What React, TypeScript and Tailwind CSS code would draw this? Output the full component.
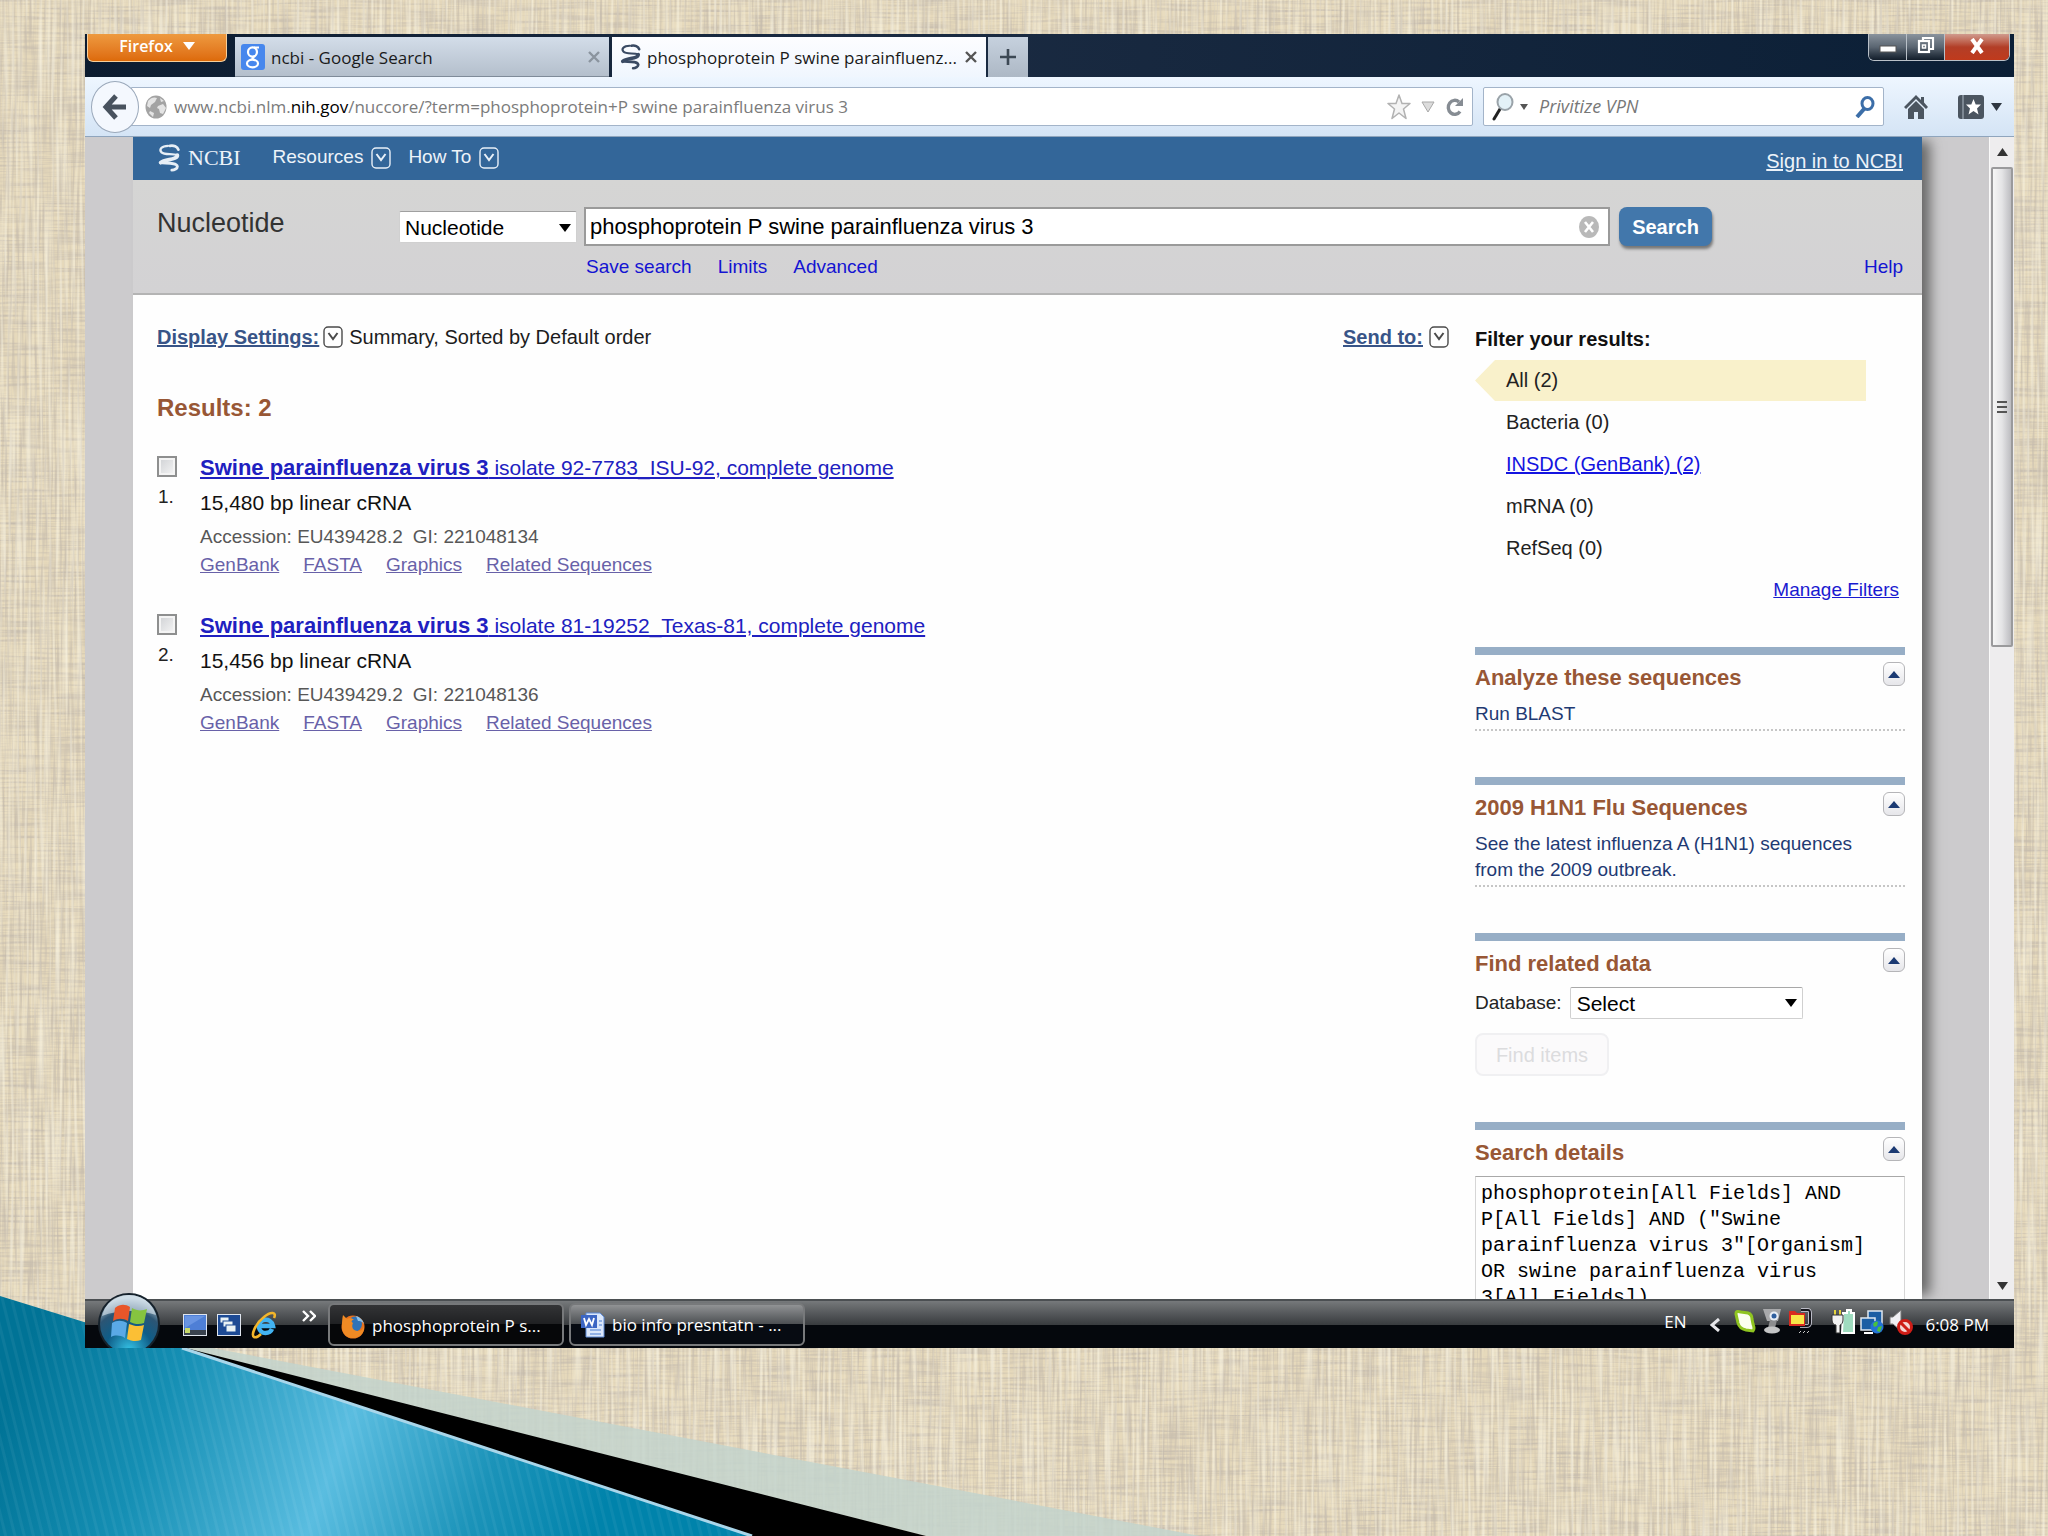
import React from "react";

const sans = "font-['Liberation_Sans',Arial,sans-serif]";
const ui = "font-['Open_Sans','Noto_Sans',sans-serif]";

function Backdrop() {
  return (
    <svg className="absolute inset-0 h-full w-full" aria-hidden="true">
      <defs>
        <filter id="weft" x="0" y="0" width="100%" height="100%">
          <feTurbulence type="fractalNoise" baseFrequency="0.02 0.4" numOctaves="2" seed="4" />
          <feColorMatrix values="0 0 0 0 0.56  0 0 0 0 0.50  0 0 0 0 0.42  2 0 0 0 -0.8" />
        </filter>
        <filter id="warp" x="0" y="0" width="100%" height="100%">
          <feTurbulence type="fractalNoise" baseFrequency="0.4 0.02" numOctaves="2" seed="9" />
          <feColorMatrix values="0 0 0 0 0.56  0 0 0 0 0.50  0 0 0 0 0.42  2 0 0 0 -0.85" />
        </filter>
        <filter id="shine" x="0" y="0" width="100%" height="100%">
          <feTurbulence type="fractalNoise" baseFrequency="0.35 0.01" numOctaves="1" seed="21" />
          <feColorMatrix values="0 0 0 0 0.96  0 0 0 0 0.92  0 0 0 0 0.78  0 1.8 0 0 -0.75" />
        </filter>
        <linearGradient id="teal" gradientUnits="userSpaceOnUse" x1="0" y1="120" x2="560" y2="330">
          <stop offset="0" stopColor="#007396" />
          <stop offset="0.25" stopColor="#158fb4" />
          <stop offset="0.55" stopColor="#5abde0" />
          <stop offset="0.8" stopColor="#1b93b9" />
          <stop offset="1" stopColor="#0083ab" />
        </linearGradient>
        <pattern id="rib" width="9" height="9" patternUnits="userSpaceOnUse" patternTransform="rotate(-14)">
          <rect width="3" height="9" fill="#ffffff" opacity="0.05" />
        </pattern>
      </defs>
      <rect width="100%" height="100%" fill="#e6d9bb" />
      <rect width="100%" height="100%" filter="url(#weft)" />
      <rect width="100%" height="100%" filter="url(#warp)" />
      <rect width="100%" height="100%" filter="url(#shine)" />
    </svg>
  );
}

function Ribbon() {
  return (
    <svg className="absolute bottom-0 left-0" width="1200" height="240" viewBox="0 0 1200 240" aria-hidden="true">
      <polygon points="176,52 212,52 1200,240 926,240" fill="#c3d3cc" opacity="0.85" />
      <polygon points="170,48 926,240 748,240" fill="#000000" />
      <polygon points="0,0 84,26 182,52 752,240 0,240" fill="url(#teal)" />
      <polygon points="0,0 84,26 182,52 752,240 0,240" fill="url(#rib)" />
      <path d="M182 52 752 240" stroke="#a9d6ea" strokeWidth="3" />
    </svg>
  );
}

function Helix({ className, color }: { className: string; color: string }) {
  return (
    <svg viewBox="0 0 24 30" className={className} fill="none" stroke={color} strokeLinecap="round" aria-hidden="true">
      <path d="M11 2C4 2 1 6 4 9c3 3 12 1 17 3" strokeWidth="2.400" />
      <path d="M13 2c4-1 8 1 9 4" strokeWidth="3" />
      <path d="M21 12c0 5-13 4-18 8" strokeWidth="4" />
      <path d="M3 20c4 1 17-1 18 4 0 2-3 4-6 4" strokeWidth="3" />
    </svg>
  );
}

function DropIcon({ light = false }: { light?: boolean }) {
  return (
    <svg viewBox="0 0 20 22" className="h-[22px] w-5 shrink-0" fill="none" stroke={light ? "#e8f0f8" : "#4a4a4a"} aria-hidden="true">
      <rect x="1" y="1" width="18" height="20" rx="4" strokeWidth="1.400" />
      <path d="m5.500 7 4.500 6 4.500-6" strokeWidth="2" />
    </svg>
  );
}

function TitleBar() {
  return (
    <div className="flex h-[43px] shrink-0 items-start bg-linear-to-r from-[#0c1c30] via-[#1b2b42] via-40% to-[#0b1f36]">
      <button className={`${ui} ml-[2px] flex h-7 w-[140px] items-center justify-center gap-[10px] rounded-b-md border border-t-0 border-[#f6cf9c] bg-linear-to-b from-[#ee9a3e] to-[#dd6a08] pb-1 text-[16px] font-semibold text-white`}>
        Firefox
        <svg viewBox="0 0 12 8" className="h-2 w-3" aria-hidden="true"><path d="M0 0h12L6 8z" fill="#fff" /></svg>
      </button>
      <div className="flex h-full items-end pt-[3px]">
        <div className={`${ui} ml-2 flex h-full w-[374px] items-center border-b border-[#7f8b99] bg-linear-to-b from-[#d3dde9] to-[#b4bfcc] pl-[6px] pr-[9px] text-[17px] text-[#1a1a1a]`}>
          <svg viewBox="0 0 24 26" className="mr-[6px] h-[26px] w-6 shrink-0" aria-hidden="true">
            <rect width="24" height="26" rx="3" fill="#4787ed" />
            <g fill="none" stroke="#fff" strokeWidth="2.200">
              <ellipse cx="11.500" cy="8" rx="4.500" ry="4.600" />
              <path d="M13 3.500h5M14 12c-3 2-4 2 0 4.500" />
              <ellipse cx="11.500" cy="19.500" rx="5.500" ry="3.800" />
            </g>
          </svg>
          <span className="grow truncate pt-[2px]">ncbi - Google Search</span>
          <svg viewBox="0 0 12 12" className="h-3 w-3" stroke="#8b949e" strokeWidth="2.400" aria-hidden="true"><path d="m1 1 10 10M11 1 1 11" /></svg>
        </div>
        <div className={`${ui} ml-[3px] flex h-full w-[374px] items-center bg-linear-to-b from-[#fdfdff] to-[#f0f6fe] pl-2 pr-[9px] text-[17px] text-[#1a1a1a]`}>
          <Helix className="mr-[6px] h-[26px] w-[21px] shrink-0" color="#3a4a63" />
          <span className="grow whitespace-nowrap pt-[2px]">phosphoprotein P swine parainfluenz...</span>
          <svg viewBox="0 0 12 12" className="h-3 w-3 shrink-0" stroke="#555" strokeWidth="2.400" aria-hidden="true"><path d="m1 1 10 10M11 1 1 11" /></svg>
        </div>
        <button aria-label="New tab" className="ml-[2px] flex h-full w-10 items-center justify-center bg-linear-to-b from-[#c6d1de] to-[#adb8c5]">
          <svg viewBox="0 0 16 16" className="h-4 w-4" stroke="#3c4854" strokeWidth="2.600" aria-hidden="true"><path d="M8 0v16M0 8h16" /></svg>
        </button>
      </div>
      <div className="ml-auto mr-1 flex h-[27px] overflow-hidden rounded-b-md border border-t-0 border-[#b9c0c8]">
        <button aria-label="Minimize" className="flex w-[38px] items-center justify-center border-r border-[#b9c0c8] bg-linear-to-b from-[#8a939d] via-[#5b6672] via-50% to-[#131e2b]">
          <svg viewBox="0 0 18 8" className="mt-1 h-2 w-[18px]" aria-hidden="true"><rect x="1" y="1" width="16" height="6" fill="#fff" stroke="#555" /></svg>
        </button>
        <button aria-label="Restore" className="flex w-[38px] items-center justify-center border-r border-[#b9c0c8] bg-linear-to-b from-[#8a939d] via-[#5b6672] via-50% to-[#131e2b]">
          <svg viewBox="0 0 18 18" className="mb-1 h-[18px] w-[18px]" fill="none" stroke="#fff" strokeWidth="2.200" aria-hidden="true"><path d="M6 4V2h10v11h-3" /><rect x="2" y="5" width="10" height="11" /><rect x="5.500" y="9" width="3" height="3" strokeWidth="1.500" /></svg>
        </button>
        <button aria-label="Close" className="flex w-[64px] items-center justify-center bg-linear-to-b from-[#cf9a8d] via-[#b23e27] via-50% to-[#c03a1c]">
          <svg viewBox="0 0 16 16" className="mb-[3px] h-4 w-4" stroke="#fff" strokeWidth="4" aria-hidden="true"><path d="m3 1 10 14M13 1 3 15" /></svg>
        </button>
      </div>
    </div>
  );
}

function NavBar() {
  return (
    <div className="flex h-[60px] shrink-0 items-center border-b border-[#8fa5bd] bg-linear-to-b from-[#eef6ff] to-[#d4e4f5] pr-3">
      <button aria-label="Back" className="z-10 ml-[6px] flex h-[52px] w-12 shrink-0 items-center justify-center rounded-[50%] border border-[#9aa8ba] bg-[#f4f8fe]">
        <svg viewBox="0 0 24 26" className="mr-[2px] h-[26px] w-6" fill="none" stroke="#48525e" strokeWidth="5" aria-hidden="true"><path d="M24 13H5M14 2 4 13l10 11" /></svg>
      </button>
      <div className={`${ui} -ml-2 flex h-[39px] min-w-0 grow items-center rounded-r-xs border border-[#a3b4c9] bg-white pl-[13px] pr-2 text-[17px] text-[#7b7b7b]`}>
        <svg viewBox="0 0 22 24" className="mr-[7px] h-6 w-[22px] shrink-0" aria-hidden="true">
          <ellipse cx="11" cy="12" rx="10.500" ry="11.500" fill="#a3a3a3" />
          <path d="M3 6c3-4 7-4 9-3l-2 4-4 3-1 3-3-2zM13 11l5-2 3 4-3 6-3-1-1-4-2-1zM5 16l4 2-1 4-4-4zM15 3l4 3-3 1z" fill="#e4e4e4" />
        </svg>
        <p className="grow truncate">
          www.ncbi.nlm.<span className="text-black">nih.gov</span>/nuccore/?term=phosphoprotein+P swine parainfluenza virus 3
        </p>
        <svg viewBox="0 0 24 26" className="h-[26px] w-6 shrink-0" fill="#f4f4f4" stroke="#b2b2b2" strokeWidth="1.500" strokeLinejoin="round" aria-hidden="true"><path d="m12 1 3 8.500h8l-6.500 5.500 2.500 9.500-7-5.500-7 5.500L7.500 15 1 9.500h8z" /></svg>
        <svg viewBox="0 0 14 12" className="ml-[10px] h-3 w-[14px] shrink-0" fill="#dcdcdc" stroke="#a8a8a8" aria-hidden="true"><path d="M1 1h12L7 11z" /></svg>
        <svg viewBox="0 0 18 20" className="ml-[11px] h-5 w-[18px] shrink-0" fill="none" stroke="#868c93" strokeWidth="3.400" aria-hidden="true"><path d="M14 14.500A6.500 7 0 1 1 13 5" /><path d="M17 1v8h-8z" fill="#868c93" stroke="none" /></svg>
      </div>
      <div className="ml-[10px] flex h-[39px] w-[401px] shrink-0 items-center rounded-xs border border-[#a3b4c9] bg-white pl-2 pr-2">
        <svg viewBox="0 0 22 28" className="h-7 w-[22px]" aria-hidden="true">
          <path d="m8 16-6 10" stroke="#222" strokeWidth="3" strokeLinecap="round" />
          <ellipse cx="13" cy="9" rx="7.500" ry="8" fill="#e3f1f7" stroke="#9aa3a9" strokeWidth="2" />
        </svg>
        <svg viewBox="0 0 8 6" className="ml-[6px] h-[6px] w-2" aria-hidden="true"><path d="M0 0h8L4 6z" fill="#555" /></svg>
        <input aria-label="Search engine" placeholder="Privitize VPN" className={`${ui} ml-2 min-w-0 grow pl-[3px] text-[18px] italic outline-none placeholder:text-[#777]`} />
        <svg viewBox="0 0 20 22" className="h-[22px] w-5" fill="none" stroke="#3c6ea8" aria-hidden="true"><ellipse cx="12.500" cy="7.500" rx="5.500" ry="6" strokeWidth="3" /><path d="m9 13-7 8" strokeWidth="4" /></svg>
      </div>
      <svg viewBox="0 0 24 24" className="ml-5 h-6 w-6 shrink-0" fill="#4b5560" aria-hidden="true"><path d="M12 0 0 12l2 2L12 4l10 10 2-2-4-4.500V2h-3v3z" /><path d="m12 6 8 8v10h-6v-7h-4v7H4V14z" /></svg>
      <svg viewBox="0 0 26 24" className="ml-[30px] h-6 w-[26px] shrink-0" aria-hidden="true"><rect width="26" height="24" rx="3" fill="#4b5560" /><path d="M5 0v24" stroke="#7c8792" strokeWidth="2" /><path d="m15.500 4 2.200 5.500h5.300l-4 4 1.500 6-5-3.500-5 3.500 1.500-6-4-4h5.300z" fill="#fff" /></svg>
      <svg viewBox="0 0 11 8" className="ml-[7px] h-2 w-[11px] shrink-0" aria-hidden="true"><path d="M0 0h11L5.500 8z" fill="#2e3640" /></svg>
    </div>
  );
}

function SiteHeader() {
  return (
    <header>
      <div className="flex h-[43px] items-center bg-[#336699] pb-[2px] pl-6 pr-[19px] text-[19px] text-[#edf3f9]">
        <Helix className="h-7 w-6" color="#e6eef6" />
        <span className="ml-[7px] font-['Liberation_Serif',serif] text-[22px]">NCBI</span>
        <a href="#resources" className="ml-8 flex items-center gap-2">Resources <DropIcon light /></a>
        <a href="#howto" className="ml-[17px] flex items-center gap-2">How To <DropIcon light /></a>
        <a href="#signin" className="ml-auto pt-[7px] text-[20px] underline">Sign in to NCBI</a>
      </div>
      <div className="flex h-[115px] items-start border-b-2 border-[#b4b4b4] bg-linear-to-b from-[#d5d5d4] to-[#d3d2d4] pl-6 pr-[19px] pt-[27px]">
        <h1 className="w-[242px] text-[27px] leading-8 text-[#333]">Nucleotide</h1>
        <div className="relative mt-1">
          <select aria-label="Database to search" className="block h-8 w-[178px] appearance-none rounded-xs border border-[#d0d0d0] border-t-[#a0a0a0] bg-white pl-[5px] text-[21px] text-black">
            <option>Nucleotide</option>
          </select>
          <svg viewBox="0 0 12 8" className="pointer-events-none absolute right-[6px] top-[13px] h-2 w-3" aria-hidden="true"><path d="M0 0h12L6 8z" /></svg>
        </div>
        <div className="ml-[7px] grow">
          <div className="flex items-center">
            <div className="flex h-[39px] grow items-center border-2 border-[#9a9a9a] bg-white pl-1 pr-[9px]">
              <input aria-label="Search term" defaultValue="phosphoprotein P swine parainfluenza virus 3" className="min-w-0 grow text-[22px] text-black outline-none" />
              <svg viewBox="0 0 20 22" className="h-[22px] w-5" aria-hidden="true"><ellipse cx="10" cy="11" rx="10" ry="11" fill="#b9b9b9" /><path d="m6 6 8 10M14 6 6 16" stroke="#fff" strokeWidth="2.600" /></svg>
            </div>
            <button className="ml-[9px] mr-[191px] h-[39px] w-[93px] shrink-0 rounded-lg bg-[#4277ab] text-[20px] font-bold text-white shadow-[1px_3px_3px_#777]">Search</button>
          </div>
          <nav className="flex items-center pl-[2px] pt-[5px] text-[19px] leading-8 text-[#1414d2]">
            <a href="#save">Save search</a>
            <a href="#limits" className="ml-[26px]">Limits</a>
            <a href="#advanced" className="ml-[26px]">Advanced</a>
            <a href="#help" className="ml-auto">Help</a>
          </nav>
        </div>
      </div>
    </header>
  );
}

const results = [
  { rest: " isolate 92-7783_ISU-92, complete genome", size: "15,480", acc: "EU439428.2", gi: "221048134" },
  { rest: " isolate 81-19252_Texas-81, complete genome", size: "15,456", acc: "EU439429.2", gi: "221048136" },
];

function Results() {
  return (
    <main className="min-w-0 grow pl-6">
      <div className="flex items-center pt-7 text-[20px] leading-7">
        <a href="#display" className="font-bold text-[#385487] underline">Display Settings:</a>
        <span className="ml-1"><DropIcon /></span>
        <span className="ml-[6px] text-[#1c1c1c]">Summary, Sorted by Default order</span>
        <a href="#send" className="ml-auto font-bold text-[#385487] underline">Send to:</a>
        <span className="ml-[6px]"><DropIcon /></span>
      </div>
      <h2 className="pt-[41px] text-[24px] font-bold leading-8 text-[#985735]">Results: 2</h2>
      <ol>
        {results.map((r, i) => (
          <li key={r.acc} className="flex h-[158px] pt-7">
            <div className="w-[43px]">
              <input type="checkbox" id={`r${i}`} aria-label={`Select item ${i + 1}`} className="mt-1 block h-[21px] w-5 appearance-none border-2 border-[#8e8f8f] bg-linear-to-br from-[#cfd1d4] to-[#f6f6f6] shadow-[inset_0_0_0_2px_#f4f4f4]" />
              <label htmlFor={`r${i}`} className="mt-[6px] block pl-[1px] text-[19px] leading-7 text-[#222]">{i + 1}.</label>
            </div>
            <div>
              <a href="#item" className="block text-[21px] leading-8 text-[#2020c0] underline">
                <b className="text-[22px]">Swine parainfluenza virus 3</b>{r.rest}
              </a>
              <p className="pt-[3px] text-[21px] leading-8 text-[#111]">{r.size} bp linear cRNA</p>
              <p className="mt-1 text-[19px] leading-7 text-[#575757]">
                Accession: {r.acc}<span className="ml-[10px]">GI: {r.gi}</span>
              </p>
              <div className="flex gap-6 text-[19px] leading-7 text-[#6861a8]">
                {["GenBank", "FASTA", "Graphics", "Related Sequences"].map((t) => (
                  <a key={t} href={`#${t}`} className="underline">{t}</a>
                ))}
              </div>
            </div>
          </li>
        ))}
      </ol>
    </main>
  );
}

function Portlet({ title, children }: { title: string; children: React.ReactNode }) {
  return (
    <section className="mb-[46px] border-t-8 border-[#97aec6]">
      <div className="flex h-[46px] items-start justify-between">
        <h3 className="pt-[7px] text-[22px] font-bold leading-8 text-[#985735]">{title}</h3>
        <button aria-label={`Collapse ${title}`} className="mt-[7px] flex h-6 w-[22px] items-center justify-center rounded-md border border-[#b5b5b8] bg-linear-to-b from-white to-[#e6e6ea]">
          <svg viewBox="0 0 12 7" className="h-[7px] w-3" aria-hidden="true"><path d="M6 0 12 7H0z" fill="#1b3a73" /></svg>
        </button>
      </div>
      {children}
    </section>
  );
}

const filters = ["All (2)", "Bacteria (0)", "INSDC (GenBank) (2)", "mRNA (0)", "RefSeq (0)"];

function Sidebar() {
  return (
    <aside className="ml-[26px] w-[430px] shrink-0">
      <h3 className="pt-[30px] text-[20px] font-bold leading-7 text-[#111]">Filter your results:</h3>
      <ul className="pt-[7px] text-[20px] text-[#222]">
        {filters.map((f, i) => (
          <li
            key={f}
            className={
              i === 0
                ? "mr-[39px] flex h-[41px] items-center bg-[#f9f1cb] pb-[2px] pl-[31px] [clip-path:polygon(0_50%,20px_0,100%_0,100%_100%,20px_100%)]"
                : "flex h-[42px] items-center pl-[31px]"
            }
          >
            {i === 2 ? <a href="#insdc" className="text-[#1414e0] underline">{f}</a> : f}
          </li>
        ))}
      </ul>
      <a href="#filters" className="mb-[43px] mt-[7px] block pr-[6px] text-right text-[19px] leading-7 text-[#1a1ad0] underline">Manage Filters</a>
      <Portlet title="Analyze these sequences">
        <a href="#blast" className="block border-b-2 border-dotted border-[#c6c6c6] pb-[2px] text-[19px] leading-[26px] text-[#1f3a73]">Run BLAST</a>
      </Portlet>
      <Portlet title="2009 H1N1 Flu Sequences">
        <a href="#flu" className="block border-b-2 border-dotted border-[#c6c6c6] pb-[2px] text-[19px] leading-[26px] text-[#1f3a73]">
          See the latest influenza A (H1N1) sequences<br />from the 2009 outbreak.
        </a>
      </Portlet>
      <Portlet title="Find related data">
        <div className="flex items-center text-[19px] text-[#222]">
          <label htmlFor="db">Database:</label>
          <div className="relative ml-2">
            <select id="db" className="block h-8 w-[233px] appearance-none rounded-xs border border-[#d0d0d0] border-t-[#a8a8a8] bg-white pl-[6px] text-[21px] text-black">
              <option>Select</option>
            </select>
            <svg viewBox="0 0 12 8" className="pointer-events-none absolute right-[6px] top-3 h-2 w-3" aria-hidden="true"><path d="M0 0h12L6 8z" /></svg>
          </div>
        </div>
        <button disabled className="mt-[14px] h-[43px] w-[134px] rounded-lg border-2 border-[#f0f0f2] bg-[#fbfafb] text-[20px] text-[#dcdcde]">Find items</button>
      </Portlet>
      <Portlet title="Search details">
        <textarea
          aria-label="Search details"
          readOnly
          rows={6}
          className="block w-full resize-none overflow-hidden border border-[#d6d6d6] border-t-[#a8a8a8] px-[5px] pt-1 font-['Liberation_Mono',monospace] text-[20px] leading-[26px] text-black outline-none"
          defaultValue={'phosphoprotein[All Fields] AND\nP[All Fields] AND ("Swine\nparainfluenza virus 3"[Organism]\nOR swine parainfluenza virus\n3[All Fields])'}
        />
      </Portlet>
    </aside>
  );
}

function Scrollbar() {
  return (
    <div className="flex w-[25px] shrink-0 flex-col items-center border-l border-[#fafafa] bg-[#eeedee]" aria-hidden="true">
      <svg viewBox="0 0 11 8" className="my-[11px] h-2 w-[11px] shrink-0"><path d="M5.500 0 11 8H0z" fill="#333" /></svg>
      <div className="flex h-[480px] w-[22px] shrink-0 flex-col items-center justify-center gap-[3px] rounded-xs border-2 border-[#9a9a9c] bg-linear-to-r from-[#f6f6f6] via-[#e4e4e6] to-[#bcbcc0]">
        <span className="h-[2px] w-[10px] bg-[#555]" />
        <span className="h-[2px] w-[10px] bg-[#555]" />
        <span className="h-[2px] w-[10px] bg-[#555]" />
      </div>
      <svg viewBox="0 0 11 8" className="mb-[9px] mt-auto h-2 w-[11px] shrink-0"><path d="M0 0h11L5.500 8z" fill="#333" /></svg>
    </div>
  );
}

function StartOrb() {
  return (
    <svg viewBox="0 0 64 56" className="absolute bottom-0 left-3 h-14 w-16" aria-hidden="true">
      <defs>
        <radialGradient id="orb" cx="0.5" cy="0.95" r="0.9">
          <stop offset="0" stopColor="#35c3e6" />
          <stop offset="0.45" stopColor="#0f5d88" />
          <stop offset="0.75" stopColor="#2c5574" />
          <stop offset="1" stopColor="#b9ccd8" />
        </radialGradient>
      </defs>
      <circle cx="32" cy="32" r="31" fill="#16222c" />
      <circle cx="32" cy="32" r="29" fill="url(#orb)" />
      <path d="M5 24C10 8 20 3 32 3s22 6 27 20C42 17 20 18 5 24z" fill="#dfeaf2" opacity="0.6" />
      <path d="M18 16c5-4 10-4 15-1l-2 14c-5-3-10-3-15 0z" fill="#e8562a" />
      <path d="M35 16c5 3 10 3 15 1l-3 14c-5 2-10 1-14-1z" fill="#86c440" />
      <path d="M15 31c5-3 10-3 15 0l-2 15c-5-3-10-3-14-1z" fill="#5aa9e6" />
      <path d="M32 32c5 2 10 3 15 1l-3 15c-5 2-10 1-14-1z" fill="#fbbf35" />
    </svg>
  );
}

function Taskbar() {
  return (
    <footer className={`${ui} relative flex h-[49px] shrink-0 items-center border-t-2 border-[#4b4f52] bg-linear-to-b from-[#76797b] via-[#3a3d40] via-50% to-[#05080d] to-50% text-[17px] text-white`}>
      <StartOrb />
      <div className="ml-[98px] flex shrink-0 items-center gap-[10px]">
        <svg viewBox="0 0 24 22" className="h-[22px] w-6" aria-hidden="true"><rect x="0.500" y="0.500" width="23" height="21" fill="#4e7fd6" stroke="#dfe5ee" /><path d="M2 2h20L2 14z" fill="#84abef" opacity="0.5" /><rect x="1" y="16" width="22" height="5" fill="#39424e" /><rect x="2" y="14" width="5" height="5" fill="#c7d96a" /></svg>
        <svg viewBox="0 0 24 22" className="h-[22px] w-6" aria-hidden="true"><rect x="0.500" y="0.500" width="23" height="21" fill="#1d4a94" stroke="#dfe5ee" /><g fill="#e9f2f5" stroke="#1d4a94"><rect x="3" y="3" width="9" height="6" /><rect x="6" y="7" width="10" height="6" /><rect x="9" y="11" width="10" height="7" /></g></svg>
        <svg viewBox="0 0 26 28" className="h-7 w-[26px]" fill="none" aria-hidden="true"><path d="M21 18c-2 5-11 6-13-1-2-9 12-12 14-2H8" stroke="#42b3f2" strokeWidth="4.500" /><path d="M23 7c3-6-3-7-10-1C4 13 0 24 3 26c2 1 5-1 7-3" stroke="#f3b52a" strokeWidth="2.600" /></svg>
      </div>
      <svg viewBox="0 0 14 12" className="mb-[18px] ml-[25px] h-3 w-[14px] shrink-0" fill="none" stroke="#fff" strokeWidth="2.400" aria-hidden="true"><path d="m1 1 5 5-5 5M8 1l5 5-5 5" /></svg>
      <button className="ml-3 flex h-[43px] w-[236px] shrink-0 items-center rounded-md border-2 border-[#77797b] bg-linear-to-b from-[#333436] via-[#1f2022] via-50% to-[#060709] to-50% pl-[11px] pt-[2px]">
        <svg viewBox="0 0 24 26" className="mr-[7px] h-[26px] w-6" aria-hidden="true">
          <ellipse cx="12" cy="14" rx="11.500" ry="11.500" fill="#e8711c" />
          <ellipse cx="14" cy="11" rx="7" ry="7.500" fill="#2f73b8" />
          <path d="M2 2l4 4c3-2 5-1 7 1-3 0-3 2-1 3-2 4 0 8 5 8 4 0 6-3 6-6 1 8-4 13-11 13C5 25 1 20 1 14c0-4 0-8 1-12z" fill="#f08a24" />
          <path d="M15 3c4 1 7 4 8 8-2-3-4-3-6-3z" fill="#8cc1ea" />
        </svg>
        phosphoprotein P s...
      </button>
      <button className="ml-[5px] flex h-[43px] w-[236px] shrink-0 items-center rounded-md border-2 border-[#77797b] bg-linear-to-b from-[#919395] via-[#4b4e51] via-50% to-[#070b12] to-50% pl-[10px]">
        <svg viewBox="0 0 24 26" className="mr-[7px] h-[26px] w-6" aria-hidden="true">
          <path d="M5 1h14l4 4v20H5z" fill="#dbe7fa" stroke="#5f8cd8" />
          <path d="M9 18h11M9 22h11M18 9h3M18 13h3" stroke="#7aa0df" strokeWidth="1.500" />
          <rect x="0" y="3" width="16" height="13" fill="#3c66c4" />
          <path d="m3 6 2 7 3-6 3 6 2-7" stroke="#fff" strokeWidth="1.800" fill="none" />
        </svg>
        bio info presntatn - ...
      </button>
      <span className="ml-auto pb-[6px]">EN</span>
      <svg viewBox="0 0 10 14" className="ml-6 h-[14px] w-[10px]" fill="none" stroke="#e6e6ea" strokeWidth="3" aria-hidden="true"><path d="M9 1 2 7l7 6" /></svg>
      <div className="mb-[7px] ml-[14px] flex items-center gap-[6px]">
        <svg viewBox="0 0 22 24" className="h-6 w-[22px]" aria-hidden="true"><path d="M2 5C2 2 4 2 7 3l7 1c3 1 4 3 4 6l1 5c1 3 2 5 0 7l-7-1c-5-1-7-3-8-7z" fill="#fbfff0" stroke="#8fc520" strokeWidth="3" /></svg>
        <svg viewBox="0 0 20 26" className="h-[26px] w-5" aria-hidden="true"><path d="M1 1h18l-3 12H5z" fill="#a8a9ab" /><path d="m8 12-2 8h7l2-8z" fill="#8c8d8f" /><ellipse cx="10" cy="22" rx="8" ry="3.500" fill="#c4c5c6" /><circle cx="12" cy="8" r="4.500" fill="#e9eef5" /><circle cx="12" cy="8" r="2.500" fill="#2f5f9e" /></svg>
        <svg viewBox="0 0 24 26" className="h-[26px] w-6" aria-hidden="true"><path d="M13 2h7q2 0 2 3v10q0 3-3 3h-7" fill="none" stroke="#d8d8e4" strokeWidth="3.600" /><path d="M13 2h7q2 0 2 3v10q0 3-3 3h-7" fill="none" stroke="#15151c" strokeWidth="2" /><path d="M1 3h6l2 2h8v13H1z" fill="#d82a20" /><path d="M3 7h13v9H3z" fill="#f8e648" /><path d="m11 25 2-2m2 2 2-2m2 2 2-2" stroke="#ccc" /></svg>
      </div>
      <div className="mb-[6px] ml-[19px] flex items-center gap-[5px]">
        <svg viewBox="0 0 24 26" className="h-[26px] w-6" aria-hidden="true"><path d="M12 4h4V1h4v3h3v20H11z" fill="#9fdcbf" stroke="#fff" strokeWidth="2" /><path d="M4 1v6M9 1v6" stroke="#e6d53c" strokeWidth="2" /><path d="M1 6h11v5c0 3-2 5-3 5v8H5v-8c-2 0-4-2-4-5z" fill="#f2f2f2" stroke="#333" /></svg>
        <svg viewBox="0 0 24 26" className="h-[26px] w-6" aria-hidden="true"><rect x="8" y="2" width="14" height="12" fill="#1b5ea4" stroke="#dfe9f2" strokeWidth="1.500" /><rect x="1" y="9" width="14" height="12" fill="#1b5ea4" stroke="#dfe9f2" strokeWidth="1.500" /><path d="M4 24h9" stroke="#fff" strokeWidth="2" /><circle cx="17" cy="18" r="6.500" fill="#2372d6" /><path d="M13 15c2-3 4-3 5-2l-1 4-3 1zM18 18l4-1-2 6-3-1z" fill="#48c13f" /></svg>
        <svg viewBox="0 0 24 26" className="h-[26px] w-6" aria-hidden="true"><path d="M1 8h3l8-7v21l-8-7H1z" fill="#f0f0f4" stroke="#777" /><circle cx="16" cy="18" r="6.500" fill="#f5d6d4" stroke="#cf1d17" strokeWidth="3" /><path d="m11 13 10 10" stroke="#cf1d17" strokeWidth="3" /></svg>
      </div>
      <span className="ml-3 mr-[25px]">6:08 PM</span>
    </footer>
  );
}

export default function App() {
  return (
    <div className={`${sans} relative flex h-screen flex-col overflow-hidden pb-[188px] pl-[85px] pr-[34px] pt-[34px]`}>
      <Backdrop />
      <Ribbon />
      <div className="relative flex min-h-0 grow flex-col">
        <TitleBar />
        <NavBar />
        <div className="flex min-h-0 grow overflow-hidden bg-[#cccbcd]">
          <div className="ml-12 mr-[67px] flex min-w-0 grow flex-col bg-[#fefefe] shadow-[12px_0_12px_-4px_#666]">
            <SiteHeader />
            <div className="flex min-h-0 grow overflow-hidden pr-[17px]">
              <Results />
              <Sidebar />
            </div>
          </div>
          <Scrollbar />
        </div>
        <Taskbar />
      </div>
    </div>
  );
}
